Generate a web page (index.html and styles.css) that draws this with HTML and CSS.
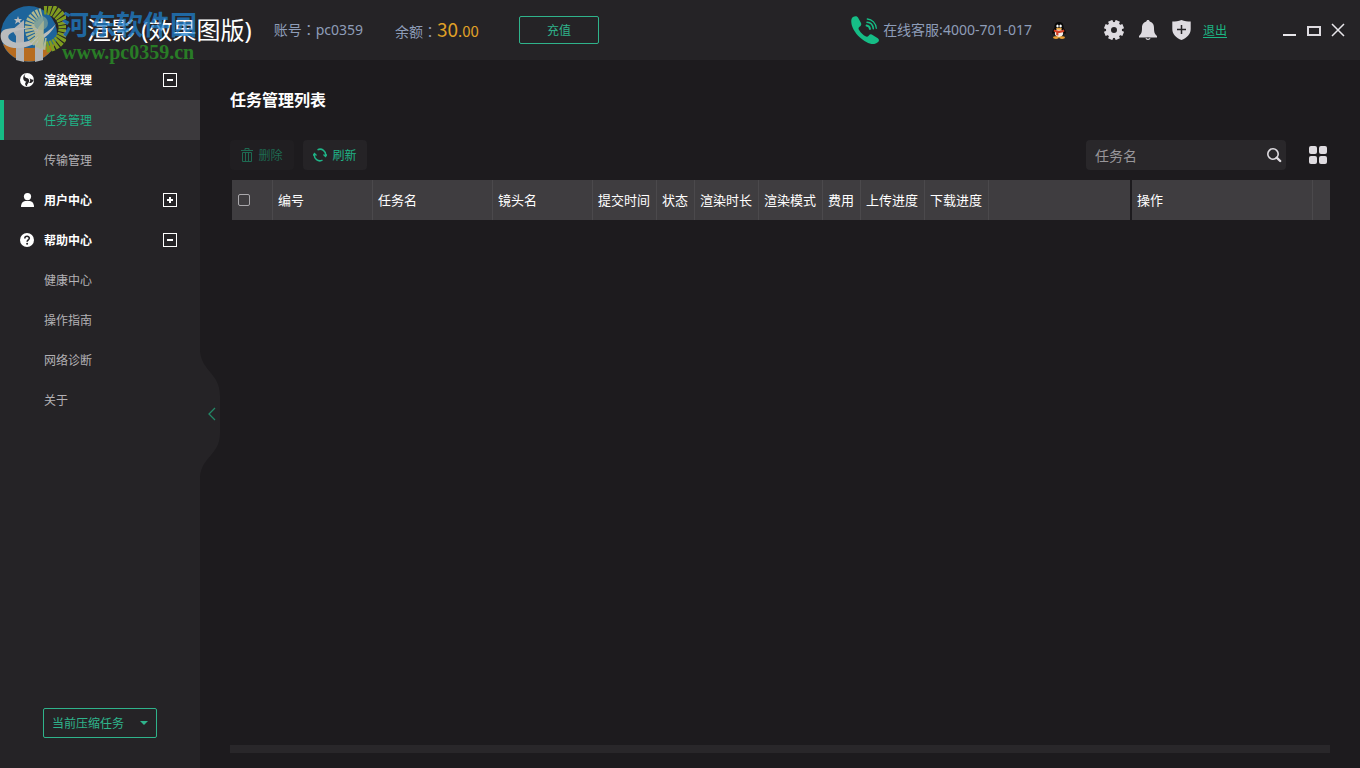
FILE: index.html
```html
<!DOCTYPE html>
<html lang="zh-CN">
<head>
  <meta charset="UTF-8">
  <meta name="viewport" content="width=device-width, initial-scale=1.0">
  <title>渲影 (效果图版)</title>
  <link rel="stylesheet" href="styles.css">
</head>
<body>
  <header class="topbar">
    <h1 class="brand">渲影 (效果图版)</h1>
    <div class="watermark">
      <svg class="watermark-logo" width="66" height="58" viewBox="0 0 66 58">
        <circle cx="29" cy="28" r="28" fill="#1b7ac2"/>
        <path d="M3 38a28 28 0 0 0 52 0Q30 46 3 38z" fill="#e8851f"/>
        <path d="M12 24l12-10v42l-8-2V30zM31 20l12-10v44l-8 2V26z" fill="#dfe3e6"/>
        <path d="M1 33C-2 20 12 22 30 22 12 25 6 28 9 33 16 42 42 33 56 18 44 42 6 50 1 33z" fill="#eceff0"/>
        <path d="M18 10l1 3h3l-2 2 1 3-3-2-3 2 1-3-2-2h3z" fill="#eceff0"/>
        <path d="M44 3a19 19 0 0 1 2 38" fill="none" stroke="#9dc41d" stroke-width="11" stroke-dasharray="3 1"/>
        <path d="M46 38C28 36 25 12 42 8" fill="none" stroke="#dfeab4" stroke-width="12" stroke-dasharray="2 1"/>
        <circle cx="41" cy="17" r="7" fill="#8fc3bd" opacity=".8"/>
        <path d="M38 42V22l6-8v28z" fill="#dfeab4" opacity=".7"/>
      </svg>
      <div class="watermark-text">
        <span class="watermark-name">河东软件园</span>
        <span class="watermark-url">www.pc0359.cn</span>
      </div>
    </div>
    <p class="account">账号<span class="colon" lang="zh-TW">：</span>pc0359</p>
    <p class="balance">余额<span class="colon" lang="zh-TW">：</span><span class="money">30<small>.00</small></span></p>
    <button class="btn-recharge" type="button">充值</button>

    <div class="support">
      <svg width="28" height="28" viewBox="0 0 28 28">
        <path d="M2 1C4-.3 6 0 7 1.500L10 7c.6 1.600 0 2.700-1.200 3.600-1.600 1.100-1.600 2-.7 3.400 2 3.200 4 5 6.400 6.300 1.300.7 2.200.5 3.100-.6 1.200-1.500 2.500-1.700 4-.8l5.200 3.400c1.500 1 1.500 2.500.3 3.700-3.600 3.300-8 2.600-13.600-1C7 20.800 2.500 15 .7 9 0 5.700-.1 2.600 2 1z" fill="#16bd86"/>
        <g fill="none" stroke="#16bd86" stroke-linecap="round">
          <path d="M15.500 9.500c2 .2 3.200 1.500 3.500 3.500" stroke-width="1.800"/>
          <path d="M16 6.200c3.500.2 6 2.800 6.300 6.500" stroke-width="1.500"/>
          <path d="M16.300 3c5 .3 8.600 4.300 9 9.300" stroke-width="1.300"/>
        </g>
      </svg>
      <span>在线客服:4000-701-017</span>
    </div>
    <svg class="qq" width="14" height="17" viewBox="0 0 14 17">
      <path d="M7 0c3.500 0 4.800 2.500 4.600 6 1.500 1.700 2.600 4 2 5.500-.5.800-1 .2-1.500-.5C11.500 14 10 15.500 7 15.500S2.500 14 1.900 11c-.5.700-1 1.300-1.500.5-.6-1.500.5-3.800 2-5.500C2.200 2.500 3.500 0 7 0z" fill="#080808"/>
      <ellipse cx="7" cy="11" rx="4.200" ry="4.300" fill="#f4ece6"/>
      <path d="M2 7.500c3 1.500 7 1.500 10 0l.4 2c-2 1.200-4 1.500-6 1.400v2.600l-2.200-.3V10.400L1.700 9.500z" fill="#d33f24"/>
      <ellipse cx="5.500" cy="4" rx="1.200" ry="1.600" fill="#fff"/>
      <ellipse cx="8.600" cy="4" rx="1.200" ry="1.600" fill="#fff"/>
      <ellipse cx="7" cy="6.700" rx="3" ry="1" fill="#e9a034"/>
      <ellipse cx="4" cy="15.600" rx="3" ry="1.300" fill="#e9a034"/>
      <ellipse cx="10" cy="15.600" rx="3" ry="1.300" fill="#e9a034"/>
    </svg>

    <div class="tools">
      <button class="icon-btn" type="button" aria-label="设置">
        <svg width="20" height="20" viewBox="0 0 20 20">
          <circle cx="10" cy="10" r="5.500" fill="none" stroke="#dedbe0" stroke-width="5"/>
          <g stroke="#dedbe0" stroke-width="4.600">
            <path d="M10 0v4M10 16v4M0 10h4M16 10h4" transform="rotate(22.500 10 10)"/>
            <path d="M10 0v4M10 16v4M0 10h4M16 10h4" transform="rotate(67.500 10 10)"/>
          </g>
        </svg>
      </button>
      <button class="icon-btn" type="button" aria-label="消息">
        <svg width="18" height="20" viewBox="0 0 18 20">
          <path fill="#dedbe0" d="M9 0c1 0 1.600.700 1.700 1.600C14 2.600 15 5 15 8c0 4.500.8 6 3 8v1.500H0V16c2.200-2 3-3.500 3-8 0-3 1-5.400 4.300-6.400C7.400.700 8 0 9 0zM6.500 18h5c-.3 1.300-1.200 2-2.500 2s-2.200-.700-2.500-2z"/>
          <path d="M7.700 18.200h2.600" stroke="#252326"/>
        </svg>
      </button>
      <button class="icon-btn" type="button" aria-label="安全">
        <svg width="19" height="20" viewBox="0 0 19 20">
          <path fill="#dedbe0" d="M9.500 0c3 1.200 6 1.500 9.200 1.500V9c0 5.500-4 9-9.200 11C4.300 18 .300 14.500.300 9V1.500C3.500 1.500 6.500 1.200 9.500 0z"/>
          <path d="M9.500 5v9M5 9.500h9" stroke="#252326" stroke-width="1.500"/>
        </svg>
      </button>
      <a class="logout" href="#">退出</a>
    </div>

    <div class="window-controls">
      <button class="icon-btn" type="button" aria-label="最小化">
        <svg width="14" height="14" viewBox="0 0 14 14"><path d="M0 12h13" stroke="#e8e6ea" stroke-width="2"/></svg>
      </button>
      <button class="icon-btn" type="button" aria-label="最大化">
        <svg width="14" height="14" viewBox="0 0 14 14"><rect x="1" y="4" width="12" height="8" fill="none" stroke="#dedbe0" stroke-width="2"/></svg>
      </button>
      <button class="icon-btn" type="button" aria-label="关闭">
        <svg width="14" height="14" viewBox="0 0 14 14"><path d="M1 1l12 12M13 1L1 13" stroke="#e8e6ea" stroke-width="1.500"/></svg>
      </button>
    </div>
  </header>

  <div class="layout">
    <aside class="sidebar">
      <nav class="menu">
        <button class="menu-group" type="button">
          <svg width="14" height="14" viewBox="0 0 14 14">
            <circle cx="7" cy="7" r="7" fill="#fff"/>
            <path d="M7.500 0C4 1 3.800 4 6.500 5 9.500 5.500 10 8.500 8 10.500 6.500 12 7 13.500 8 14 4.500 12.500 4.500 10 6.500 8.800 4 8.500 3 6.500 3.200 4.500 3.500 2 5.500 .3 7.500 0z" fill="#252326"/>
            <path d="M14 6.500C12.500 9.500 11 10.500 9 10c1.500-1.500 1.500-3.500.5-5 1.500 1.500 3 2 4.500 1.500z" fill="#252326"/>
          </svg>
          <span>渲染管理</span>
          <svg class="toggle" width="14" height="14" viewBox="0 0 14 14"><rect x=".5" y=".5" width="13" height="13" fill="none" stroke="#fff"/><path d="M4 7h6" stroke="#fff" stroke-width="2"/></svg>
        </button>
        <a class="menu-item active" href="#">任务管理</a>
        <a class="menu-item" href="#">传输管理</a>

        <button class="menu-group" type="button">
          <svg width="14" height="14" viewBox="0 0 14 14"><circle cx="7.500" cy="3.600" r="3.600" fill="#fff"/><path d="M1 14c0-4 2-6 5-6h3c3 0 5 2 5 6z" fill="#fff"/></svg>
          <span>用户中心</span>
          <svg class="toggle" width="14" height="14" viewBox="0 0 14 14"><rect x=".5" y=".5" width="13" height="13" fill="none" stroke="#fff"/><path d="M4 7h6M7 4v6" stroke="#fff" stroke-width="2"/></svg>
        </button>

        <button class="menu-group" type="button">
          <svg width="14" height="14" viewBox="0 0 14 14">
            <circle cx="7" cy="7" r="7" fill="#fff"/>
            <path d="M4.800 5.400C4.800 2.600 9.400 2.600 9.300 5.300 9.300 6.800 7.200 7 7.100 8.700" fill="none" stroke="#252326" stroke-width="1.600"/>
            <circle cx="7.100" cy="10.800" r="1" fill="#252326"/>
          </svg>
          <span>帮助中心</span>
          <svg class="toggle" width="14" height="14" viewBox="0 0 14 14"><rect x=".5" y=".5" width="13" height="13" fill="none" stroke="#fff"/><path d="M4 7h6" stroke="#fff" stroke-width="2"/></svg>
        </button>
        <a class="menu-item" href="#">健康中心</a>
        <a class="menu-item" href="#">操作指南</a>
        <a class="menu-item" href="#">网络诊断</a>
        <a class="menu-item" href="#">关于</a>
      </nav>

      <div class="zip-box">
        <select class="zip-select" aria-label="当前压缩任务">
          <option>当前压缩任务</option>
        </select>
        <svg class="zip-arrow" width="8" height="4" viewBox="0 0 8 4"><path d="M0 0h8L4 4z" fill="#2fb38b"/></svg>
      </div>

      <button class="collapse" type="button" aria-label="收起">
        <svg width="20" height="126" viewBox="0 0 20 126">
          <path d="M0 0C2 21 20 22 20 45V82C20 104 2 105 0 126z" fill="#252326"/>
          <path d="M15 57l-6 6 6 6" fill="none" stroke="#238867" stroke-width="1.300"/>
        </svg>
      </button>
    </aside>

    <main class="content">
      <h2>任务管理列表</h2>

      <div class="toolbar">
        <button class="btn" type="button" disabled>
          <svg width="12" height="14" viewBox="0 0 12 14" fill="none" stroke="currentColor"><path d="M0 2.500h12M4 2V.500h4V2M1.500 4.500v9h9v-9zM4.500 5v8M7.500 5v8"/></svg>
          删除
        </button>
        <button class="btn" type="button">
          <svg width="14" height="14" viewBox="0 0 14 14" fill="none" stroke="currentColor" stroke-width="1.500"><path d="M4.500 1.800A5.600 5.600 0 0 1 12.500 8M9.500 12.200A5.600 5.600 0 0 1 1.500 6"/><path d="M0 7.500L1.500 5.500 3.500 7.500M10.500 6.500l2 2 1.500-2" stroke-width="1.300"/></svg>
          刷新
        </button>
        <div class="search">
          <input type="text" placeholder="任务名" aria-label="任务名">
          <button class="icon-btn" type="button" aria-label="搜索">
            <svg width="16" height="16" viewBox="0 0 16 16" fill="none" stroke="#dedbe0"><circle cx="7" cy="7" r="5.200" stroke-width="1.600"/><path d="M10.700 10.700l3.500 3.300" stroke-width="2.400" stroke-linecap="round"/></svg>
          </button>
        </div>
        <button class="icon-btn" type="button" aria-label="视图">
          <svg width="20" height="20" viewBox="0 0 20 20" fill="#dedbe0"><rect x="1" y="1" width="8" height="8" rx="2"/><rect x="11" y="1" width="8" height="8" rx="2"/><rect x="1" y="11" width="8" height="8" rx="2"/><rect x="11" y="11" width="8" height="8" rx="2"/></svg>
        </button>
      </div>

      <table class="tasks">
        <colgroup>
          <col class="w-check">
          <col class="w-100">
          <col class="w-120">
          <col class="w-100">
          <col class="w-64">
          <col class="w-38">
          <col class="w-64">
          <col class="w-64">
          <col class="w-38">
          <col class="w-64">
          <col class="w-64">
          <col>
          <col class="w-action">
          <col class="w-end">
        </colgroup>
        <thead>
          <tr>
            <th><input type="checkbox" aria-label="全选"></th>
            <th>编号</th>
            <th>任务名</th>
            <th>镜头名</th>
            <th>提交时间</th>
            <th>状态</th>
            <th>渲染时长</th>
            <th>渲染模式</th>
            <th>费用</th>
            <th>上传进度</th>
            <th>下载进度</th>
            <th class="last"></th>
            <th class="action">操作</th>
            <th class="last"></th>
          </tr>
        </thead>
      </table>

      <div class="scrollbar"></div>
    </main>
  </div>
</body>
</html>
```
FILE: styles.css
```css
* {
  box-sizing: border-box;
}
body {
  margin: 0;
  height: 100vh;
  display: flex;
  flex-direction: column;
  overflow: hidden;
  font-family: "Noto Sans", "Noto Sans CJK SC", sans-serif;
  font-size: 12px;
  background-color: #1d1b1e;
  color: #fff;
}
h1, h2, p {
  margin: 0;
}
svg {
  display: block;
  flex: none;
}
button, input, select {
  font-family: inherit;
}
button {
  padding: 0;
  border: none;
  background: none;
  color: inherit;
  cursor: pointer;
}

/* header */
.topbar {
  position: relative;
  z-index: 1;
  display: flex;
  align-items: center;
  height: 60px;
  flex: none;
  padding: 0 15px 0 87px;
  background-color: #252326;
  white-space: nowrap;
}
.brand {
  font-size: 24px;
  font-weight: normal;
  line-height: 36px;
}
.watermark {
  position: absolute;
  left: 0;
  top: 6px;
  opacity: 0.75;
  pointer-events: none;
}
.watermark-text {
  position: absolute;
  left: 62px;
  top: 4px;
  display: flex;
  flex-direction: column;
}
.watermark-name {
  font-size: 27px;
  line-height: 30px;
  font-weight: bold;
  color: #1f80cc;
}
.watermark-url {
  font-family: "Liberation Serif", serif;
  font-size: 20px;
  line-height: 24px;
  font-weight: bold;
  color: #2b9a27;
}
.account, .balance, .support {
  font-size: 14px;
  line-height: 20px;
  color: #8e9db8;
}
.account {
  margin-left: 22px;
}
.balance {
  margin-left: 32px;
}
.colon {
  font-family: "Noto Sans CJK TC", sans-serif;
  line-height: 1;
}
.money {
  font-family: "Noto Sans CJK SC", sans-serif;
  font-size: 19px;
  line-height: 1;
  color: #e0a126;
}
.money small {
  font-size: 15px;
}
.btn-recharge {
  width: 80px;
  height: 28px;
  margin-left: 40px;
  border: 1px solid #2fb38b;
  border-radius: 2px;
  font-size: 12px;
  color: #2fb38b;
}
.support {
  display: flex;
  align-items: center;
  gap: 4px;
  margin-left: auto;
}
.qq {
  margin-left: 20px;
}
.tools {
  display: flex;
  align-items: center;
  gap: 15px;
  margin-left: 38px;
}
.logout {
  margin-left: -3px;
  color: #1cb583;
  text-underline-offset: 2px;
}
.window-controls {
  display: flex;
  gap: 10px;
  margin-left: 56px;
}

/* sidebar */
.layout {
  display: flex;
  flex: 1;
  min-height: 0;
}
.sidebar {
  position: relative;
  display: flex;
  flex-direction: column;
  justify-content: space-between;
  width: 200px;
  flex: none;
  padding-bottom: 30px;
  background-color: #252326;
}
.menu {
  display: flex;
  flex-direction: column;
}
.menu-group {
  display: flex;
  align-items: center;
  gap: 10px;
  height: 40px;
  padding: 0 23px 0 20px;
  font-size: 12px;
  font-weight: bold;
}
.toggle {
  margin-left: auto;
}
.menu-item {
  padding-top: 2px;
  padding-left: 44px;
  line-height: 38px;
  color: #b3b1b5;
  text-decoration: none;
}
.menu-item.active {
  padding-left: 40px;
  border-left: 4px solid #16bd86;
  background-color: #3b393c;
  color: #1fb487;
}
.zip-box {
  display: grid;
  align-items: center;
  margin: 0 43px;
}
.zip-select {
  grid-area: 1 / 1;
  appearance: none;
  width: 100%;
  height: 30px;
  padding: 0 8px;
  border: 1px solid #2fb38b;
  border-radius: 2px;
  background: none;
  font-size: 12px;
  color: #2fb38b;
}
.zip-arrow {
  grid-area: 1 / 1;
  justify-self: end;
  margin-right: 9px;
  pointer-events: none;
}
.collapse {
  position: absolute;
  left: 100%;
  top: 50%;
  transform: translateY(-50%);
}

/* content */
.content {
  display: flex;
  flex-direction: column;
  flex: 1;
  min-width: 0;
  padding: 28px 30px 15px;
}
h2 {
  font-size: 16px;
  line-height: 24px;
}
.toolbar {
  display: flex;
  align-items: center;
  gap: 9px;
  margin-top: 28px;
  padding-right: 2px;
}
.btn {
  display: flex;
  align-items: center;
  justify-content: center;
  gap: 5px;
  width: 64px;
  height: 30px;
  border-radius: 4px;
  background-color: #252326;
  font-size: 12px;
  color: #1fb487;
}
.btn:disabled {
  background-color: #201e21;
  color: #1e6a52;
}
.search {
  display: flex;
  align-items: center;
  width: 200px;
  height: 30px;
  margin-left: auto;
  margin-right: 13px;
  padding: 0 4px 0 9px;
  border-radius: 4px;
  background-color: #29272a;
}
.search input {
  flex: 1;
  min-width: 0;
  padding: 0;
  border: none;
  outline: none;
  background: none;
  font-size: 14px;
  color: #fff;
}
.search input::placeholder {
  color: #98969a;
}
.tasks {
  table-layout: fixed;
  width: calc(100% - 2px);
  margin: 10px 0 0 2px;
  border-collapse: separate;
  border-spacing: 0;
}
.tasks th {
  height: 40px;
  padding: 0 0 2px 5px;
  border-right: 1px solid #4b494c;
  background-color: #3f3d40;
  font-size: 13px;
  font-weight: normal;
  text-align: left;
  white-space: nowrap;
}
.tasks th.last {
  border-right: none;
}
.tasks th.action {
  border-left: 2px solid #1d1b1e;
}
.tasks input {
  display: block;
  appearance: none;
  width: 12px;
  height: 12px;
  margin: 2px 1px 0;
  border: 1px solid #aaa8ac;
  border-radius: 2px;
}
.w-check { width: 41px; }
.w-38 { width: 38px; }
.w-64 { width: 64px; }
.w-100 { width: 100px; }
.w-120 { width: 120px; }
.w-action { width: 183px; }
.w-end { width: 17px; }
.scrollbar {
  height: 8px;
  margin-top: auto;
  background-color: #29272a;
}
```
